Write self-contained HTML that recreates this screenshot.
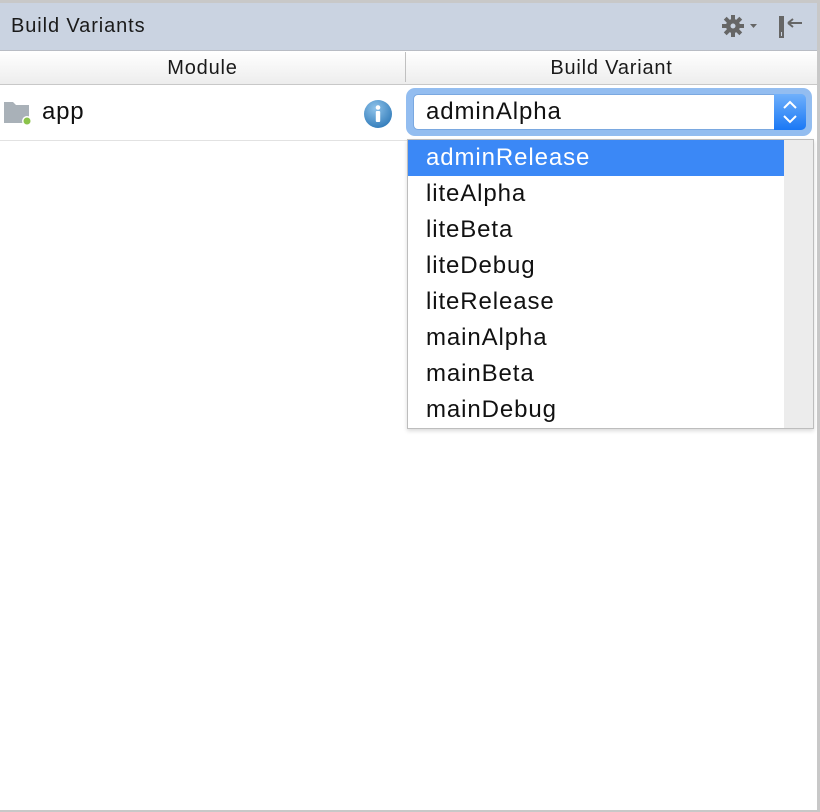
<!DOCTYPE html>
<html><head><style>
body{margin:0;width:820px;height:812px;overflow:hidden;background:#fff;font-family:"Liberation Sans",sans-serif;position:relative}
.a{position:absolute}
</style></head><body>
<div class="a" style="left:0;top:0;width:820px;height:3px;background:#c8c8c8"></div>
<div class="a" style="left:0;top:3px;width:817px;height:47px;background:#cad3e1;border-bottom:1px solid #b8bcc4"></div>
<div class="a" style="left:11px;top:15px;font-size:20px;letter-spacing:0.9px;color:#1a1a1a">Build Variants</div>
<svg class="a" style="left:720px;top:12px" width="44" height="28" viewBox="0 0 44 28">
<g fill="#666"><circle cx="13" cy="14" r="7"/>
<rect x="11" y="3" width="4" height="22"/><rect x="2" y="12" width="22" height="4"/>
<rect x="11" y="3" width="4" height="22" transform="rotate(45 13 14)"/><rect x="11" y="3" width="4" height="22" transform="rotate(-45 13 14)"/>
<path d="M30 12h7l-3.5 4z"/></g><circle cx="13" cy="14" r="2.5" fill="#cad3e1"/></svg>
<svg class="a" style="left:776px;top:12px" width="30" height="28"><rect x="3" y="4" width="5" height="22" fill="#666"/><rect x="5" y="20" width="1" height="4" fill="#cad3e1"/><path d="M12 11h14M12 11l5-4M12 11l5 4" stroke="#666" stroke-width="2" fill="none"/></svg>
<div class="a" style="left:0;top:51px;width:817px;height:33px;background:linear-gradient(#fff,#ededed);border-bottom:1px solid #c8c8c8"></div>
<div class="a" style="left:405px;top:52px;width:1px;height:30px;background:#c0c0c0"></div>
<div class="a" style="left:0;top:57px;width:405px;text-align:center;font-size:20px;letter-spacing:0.8px;color:#1a1a1a">Module</div>
<div class="a" style="left:406px;top:57px;width:411px;text-align:center;font-size:20px;letter-spacing:0.8px;color:#1a1a1a">Build Variant</div>
<div class="a" style="left:0;top:140px;width:408px;height:1px;background:#e2e2e2"></div>
<svg class="a" style="left:3px;top:100px" width="32" height="28"><path d="M1 2h9l3 3h13v18H1z" fill="#a9b1b8"/><circle cx="24" cy="21" r="5" fill="#fff"/><circle cx="24" cy="21" r="3.5" fill="#8bc34a"/></svg>
<div class="a" style="left:42px;top:98px;font-size:24px;letter-spacing:0.8px;color:#111">app</div>
<svg class="a" style="left:363px;top:99px" width="30" height="30"><defs><radialGradient id="g" cx=".4" cy=".3" r=".8"><stop offset="0" stop-color="#8fc3ea"/><stop offset="1" stop-color="#2a76b6"/></radialGradient></defs><circle cx="15" cy="15" r="14" fill="url(#g)"/><circle cx="15" cy="8.5" r="2.3" fill="#fff"/><rect x="12.8" y="12" width="4.4" height="11" rx="1" fill="#fff"/></svg>
<div class="a" style="left:406px;top:88px;width:406px;height:48px;border-radius:9px;background:#93bdf0"></div>
<div class="a" style="left:413px;top:94px;width:393px;height:36px;border-radius:5px;background:#fff;border:1px solid #7aa8e0;box-sizing:border-box"></div>
<div class="a" style="left:774px;top:94px;width:32px;height:36px;border-radius:0 5px 5px 0;background:linear-gradient(#6fb0fb,#1a78f5)"></div>
<svg class="a" style="left:774px;top:94px" width="32" height="36"><path d="M10 14l6-6 6 6M10 22l6 6 6-6" stroke="#fff" stroke-width="2" fill="none"/></svg>
<div class="a" style="left:426px;top:98px;font-size:24px;letter-spacing:0.9px;color:#111">adminAlpha</div>
<div class="a" style="left:407px;top:139px;width:407px;height:290px;border:1px solid #bdbdbd;box-sizing:border-box;background:#fff;box-shadow:0 2px 4px rgba(0,0,0,.15)"></div>
<div class="a" style="left:784px;top:140px;width:29px;height:288px;background:#ececec"></div>
<div class="a" style="left:408px;top:140px;width:376px;height:36px;background:#3b88f6"></div>
<div class="a" style="left:426px;top:140px;font-size:24px;letter-spacing:0.9px;line-height:36px;color:#111">
<div style="color:#fff">adminRelease</div><div>liteAlpha</div><div>liteBeta</div><div>liteDebug</div><div>liteRelease</div><div>mainAlpha</div><div>mainBeta</div><div>mainDebug</div></div>
<div class="a" style="left:817px;top:0;width:3px;height:812px;background:#c8c8c8"></div>
<div class="a" style="left:0;top:810px;width:820px;height:2px;background:#c8c8c8"></div>
</body></html>
